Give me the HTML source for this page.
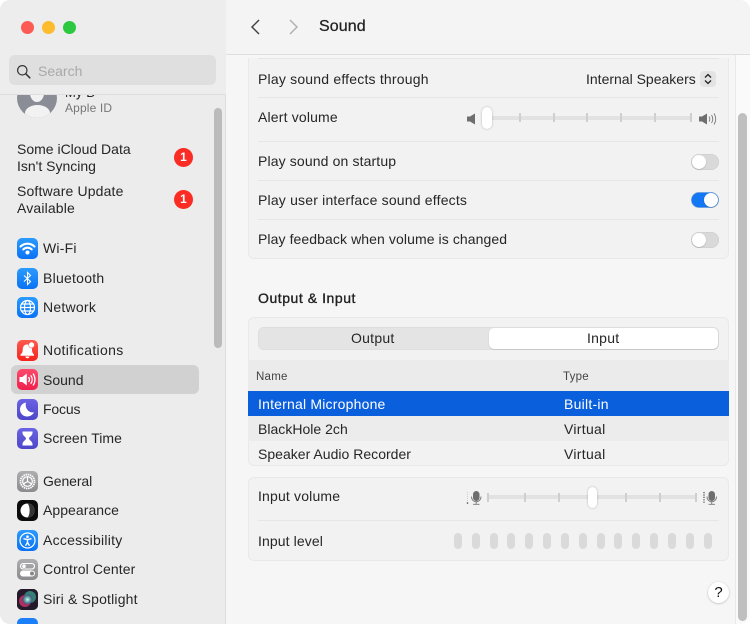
<!DOCTYPE html>
<html><head><meta charset="utf-8"><style>
html,body{margin:0;padding:0;background:#fff}
#w{position:relative;width:750px;height:624px;overflow:hidden;background:#f6f6f6;font-family:"Liberation Sans",sans-serif;font-size:14px;color:#262626;letter-spacing:.1px;border-radius:10px}
#w div,#w svg{position:absolute}
.t{white-space:nowrap;line-height:18px}
.ic{left:17px;width:21px;height:21px;border-radius:5px;overflow:hidden}
.ic svg{left:0;top:0;width:21px;height:21px}
.sep{height:1px;background:#e6e6e6}
.card{left:248px;width:481px;border-radius:6px;background:#f2f2f2;box-shadow:inset 0 0 0 1px #e9e9e9}
.tg{width:28px;height:16px;border-radius:8px;background:#d9d9d9;left:691px;box-shadow:inset 0 0 0 .5px #ccc}
.tg div{left:1px;top:1px;width:14px;height:14px;border-radius:7px;background:#fff;box-shadow:0 .5px 1px #0004}
.badge{left:174px;width:19px;height:19px;border-radius:50%;background:#fb2c24;color:#fff;font-weight:bold;font-size:12px;line-height:19px;text-align:center;letter-spacing:0}
.tick{width:2px;height:9px;background:#cfcfcf}
.lv{top:533px;width:8px;height:16px;border-radius:4px;background:#dadada}
</style></head><body><div id="w">

<!-- sidebar -->
<div style="left:0;top:0;width:226px;height:624px;background:#ececec;border-right:1px solid #dcdcdc;box-sizing:border-box"></div>
<div style="left:0;top:0;width:226px;height:95px;background:#ededed;border-bottom:1px solid #dedede;box-sizing:border-box;z-index:3"></div>
<div style="left:21px;top:21px;width:13px;height:13px;border-radius:50%;background:#fc5a55;z-index:4"></div>
<div style="left:42px;top:21px;width:13px;height:13px;border-radius:50%;background:#fdbb2e;z-index:4"></div>
<div style="left:63px;top:21px;width:13px;height:13px;border-radius:50%;background:#2cc83f;z-index:4"></div>
<div style="left:9px;top:55px;width:207px;height:30px;border-radius:6px;background:#dfdfdf;z-index:4"></div>
<svg style="left:16px;top:64px;z-index:5" width="15" height="15" viewBox="0 0 15 15" fill="none" stroke="#333" stroke-width="1.2"><circle cx="6.3" cy="6.3" r="4.7"/><path d="M9.8 9.8l4 4" stroke-linecap="round" stroke-width="1.5"/></svg>
<div class="t" style="left:38px;top:62px;color:#a9a9a9;z-index:5;letter-spacing:0">Search</div>

<!-- avatar -->
<div style="left:17px;top:78px;width:40px;height:40px;border-radius:50%;background:#8b8d96;overflow:hidden"><div style="left:13px;top:6px;width:14px;height:18px;border-radius:50%;background:#f2f2f2"></div><div style="left:8px;top:27px;width:25px;height:16px;border-radius:50%;background:#f2f2f2"></div></div>
<div class="t" style="left:65px;top:84px;font-size:13px">My D</div>
<div class="t" style="left:65px;top:99px;font-size:12px;color:#777;letter-spacing:.15px">Apple ID</div>

<div style="left:214px;top:108px;width:8px;height:240px;border-radius:4px;background:#bbb"></div>

<div class="t" style="left:17px;top:141px;line-height:17px;letter-spacing:0">Some iCloud Data<br>Isn't Syncing</div>
<div class="badge" style="top:148px">1</div>
<div class="t" style="left:17px;top:183px;line-height:17px;letter-spacing:.15px">Software Update<br>Available</div>
<div class="badge" style="top:190px">1</div>

<div style="left:11px;top:365px;width:188px;height:29px;border-radius:6px;background:#d1d1d1"></div>

<!-- icons -->
<div class="ic" style="top:238px;background:linear-gradient(#2b9bfd,#0a72f5)"><svg viewBox="0 0 21 21" fill="none" stroke="#fff" stroke-width="2.1" stroke-linecap="round"><path d="M3.5 8.500c4-3.800 10-3.800 14 0"/><path d="M6.300 11.400c2.500-2.300 5.900-2.300 8.400 0"/><circle cx="10.500" cy="14.500" r="1" fill="#fff"/></svg></div>
<div class="t" style="left:43px;top:239px;letter-spacing:.2px">Wi-Fi</div>
<div class="ic" style="top:268px;background:linear-gradient(#2b9bfd,#0a72f5)"><svg viewBox="0 0 21 21" fill="none" stroke="#fff" stroke-width="1.100"><path d="M7 7.500l6.500 6-3 3V4.500l3 3L7 13.500"/></svg></div>
<div class="t" style="left:43px;top:269px;letter-spacing:.25px">Bluetooth</div>
<div class="ic" style="top:297px;background:linear-gradient(#2b9bfd,#0a72f5)"><svg viewBox="0 0 21 21" fill="none" stroke="#fff" stroke-width="1.200"><circle cx="10.500" cy="10.500" r="7"/><ellipse cx="10.500" cy="10.500" rx="3" ry="7"/><path d="M3.500 10.500h14M4.500 7h12M4.500 14h12"/></svg></div>
<div class="t" style="left:43px;top:298px;letter-spacing:.25px">Network</div>

<div class="ic" style="top:340px;background:linear-gradient(#fd5a4e,#f5221c)"><svg viewBox="0 0 21 21" fill="#fff"><path d="M10 4.500c-3 0-4.300 2.500-4.300 5.200 0 2.700-1 3.800-2.200 4.800v1.300h13.500v-1.300c-1-1-2-2.200-2-4.800 0-.5 0-1-.2-1.500-2 0-3.800-2-3.300-3.500-.5-.2-1-.2-1.500-.2z"/><circle cx="14.500" cy="5" r="2.700"/><path d="M8.300 16.500h4.200c0 1-.9 1.700-2.100 1.700s-2.100-.7-2.100-1.700z"/></svg></div>
<div class="t" style="left:43px;top:341px;letter-spacing:.33px">Notifications</div>
<div class="ic" style="top:369px;background:linear-gradient(#fd4a6a,#f11f4d)"><svg viewBox="0 0 21 21" fill="none" stroke="#fff" stroke-width="1.300" stroke-linecap="round"><path d="M2.500 8h2.800L9.800 4.500v12l-4.500-3.500H2.500z" fill="#fff" stroke="none"/><path d="M11.800 8.500c.8 1.200.8 2.800 0 4M14 6.800c1.500 2.200 1.500 5.200 0 7.400M16.300 5c2.200 3.300 2.200 7.700 0 11"/></svg></div>
<div class="t" style="left:43px;top:371px;letter-spacing:0">Sound</div>
<div class="ic" style="top:399px;background:linear-gradient(#6a63e4,#4d46c8)"><svg viewBox="0 0 21 21" fill="#fff"><path d="M9 3.500c-3.700.7-6 3.700-6 7 0 3.900 3.200 7 7.200 7 3.100 0 5.700-1.700 6.800-4.200-4.800 1-9.500-3.800-8-9.800z"/></svg></div>
<div class="t" style="left:43px;top:400px;letter-spacing:-.15px">Focus</div>
<div class="ic" style="top:428px;background:linear-gradient(#6a63e4,#4d46c8)"><svg viewBox="0 0 21 21" fill="#fff"><path d="M5.500 3.500h10v1.500c0 2.500-3.500 4-3.500 5.500s3.500 3 3.500 5.500v1.500h-10V16c0-2.500 3.500-4 3.500-5.500S5.500 7.500 5.500 5z"/></svg></div>
<div class="t" style="left:43px;top:429px;letter-spacing:.03px">Screen Time</div>

<div class="ic" style="top:471px;background:linear-gradient(#aeaeb0,#8b8b8e)"><svg viewBox="0 0 21 21" fill="none" stroke="#fff" stroke-width="1.200"><circle cx="10.500" cy="10.500" r="7" stroke-dasharray="1.500 .7" stroke-width="1.800"/><circle cx="10.500" cy="10.500" r="4.800"/><path d="M10.500 10.500V6M10.500 10.500l4 2.300M10.500 10.500l-4 2.300"/></svg></div>
<div class="t" style="left:43px;top:472px;letter-spacing:-.1px">General</div>
<div class="ic" style="top:500px;background:#0c0c0c"><svg viewBox="0 0 21 21"><circle cx="10.500" cy="10.500" r="7" fill="#fff"/><path d="M10.500 3.500a7 7 0 0 1 0 14c2.800-2 2.800-12 0-14z" fill="#333"/></svg></div>
<div class="t" style="left:43px;top:501px;letter-spacing:.05px">Appearance</div>
<div class="ic" style="top:530px;background:linear-gradient(#2b9bfd,#0a72f5)"><svg viewBox="0 0 21 21" fill="none" stroke="#fff" stroke-width="1.200"><circle cx="10.500" cy="10.500" r="7.500"/><circle cx="10.500" cy="6.700" r="1.300" fill="#fff" stroke="none"/><path d="M6.500 8.700l4 .8 4-.8M10.500 9.500v3M10.500 12.500l-2 3.200M10.500 12.500l2 3.200" stroke-width="1.400"/></svg></div>
<div class="t" style="left:43px;top:531px;letter-spacing:.25px">Accessibility</div>
<div class="ic" style="top:559px;background:linear-gradient(#aeaeb0,#8b8b8e)"><svg viewBox="0 0 21 21"><rect x="3.500" y="4.500" width="14" height="5.500" rx="2.750" fill="none" stroke="#fff" stroke-width="1.100"/><circle cx="7" cy="7.200" r="1.800" fill="#fff"/><rect x="3" y="11.500" width="15" height="6" rx="3" fill="#fff"/><circle cx="15" cy="14.500" r="2" fill="#888"/></svg></div>
<div class="t" style="left:43px;top:560px;letter-spacing:.1px">Control Center</div>
<div class="ic" style="top:589px;background:#222"><svg viewBox="0 0 21 21"><defs><radialGradient id="a" cx=".5" cy=".5" r=".5"><stop offset="0" stop-color="#cfe"/><stop offset=".5" stop-color="#6aa"/><stop offset="1" stop-color="#447"/></radialGradient></defs><rect width="21" height="21" fill="#241a2c"/><circle cx="8" cy="12" r="6" fill="#d0366a" opacity=".8"/><circle cx="13" cy="8" r="6" fill="#3a9a8a" opacity=".8"/><circle cx="10.500" cy="10.500" r="5" fill="url(#a)"/></svg></div>
<div class="t" style="left:43px;top:590px;letter-spacing:.18px">Siri &amp; Spotlight</div>
<div class="ic" style="top:618px;background:#1a7ff8"></div>
<div class="t" style="left:43px;top:620px">Privacy &amp; Security</div>

<!-- main top bar -->
<div style="left:226px;top:0;width:524px;height:55px;background:#f4f4f4;border-bottom:1px solid #dedede;box-sizing:border-box;z-index:3"></div>
<svg style="left:249px;top:18px;z-index:4" width="12" height="18" viewBox="0 0 12 18" fill="none" stroke="#444" stroke-width="1.500"><path d="M10 2L3 9l7 7"/></svg>
<svg style="left:288px;top:18px;z-index:4" width="12" height="18" viewBox="0 0 12 18" fill="none" stroke="#b2b2b2" stroke-width="1.500"><path d="M2 2l7 7-7 7"/></svg>
<div class="t" style="left:319px;top:18px;font-size:16px;color:#222;z-index:4;-webkit-text-stroke:.25px #222;letter-spacing:.1px">Sound</div>

<!-- right scrollbar -->
<div style="left:735px;top:0;width:15px;height:624px;background:#fafafa;border-left:1px solid #e9e9e9;box-sizing:border-box"></div>
<div style="left:738px;top:113px;width:9px;height:508px;border-radius:4.500px;background:#bfbfbf"></div>

<!-- card 1 -->
<div class="card" style="top:40px;height:219px"></div>
<div class="sep" style="left:258px;top:58px;width:461px"></div>
<div class="t" style="left:258px;top:70px;letter-spacing:.2px">Play sound effects through</div>
<div class="t" style="left:586px;top:70px;letter-spacing:0">Internal Speakers</div>
<div style="left:700px;top:71px;width:16px;height:16px;border-radius:4px;background:#e3e3e3"></div>
<svg style="left:700px;top:71px" width="16" height="16" viewBox="0 0 16 16" fill="none" stroke="#222" stroke-width="1.300"><path d="M5 6.500L8 3.500l3 3M5 9.500l3 3 3-3"/></svg>
<div class="sep" style="left:258px;top:97px;width:461px"></div>
<div class="t" style="left:258px;top:108px;letter-spacing:.17px">Alert volume</div>
<svg style="left:466px;top:112px" width="12" height="14" viewBox="0 0 12 14" fill="#6e6e6e"><path d="M1 4.500h3L9 1.500v11l-5-3H1z"/></svg>
<div style="left:490px;top:116px;width:202px;height:4px;background:#e2e2e2"></div>
<div class="tick" style="left:519px;top:113px"></div><div class="tick" style="left:553px;top:113px"></div><div class="tick" style="left:586px;top:113px"></div><div class="tick" style="left:620px;top:113px"></div><div class="tick" style="left:654px;top:113px"></div><div class="tick" style="left:690px;top:113px"></div>
<div style="left:482px;top:107px;width:10px;height:22px;border-radius:5px;background:#fff;box-shadow:0 0 2px #0004"></div>
<svg style="left:698px;top:112px" width="20" height="14" viewBox="0 0 20 14"><path d="M1 4.500h3L9 1.500v11l-5-3H1z" fill="#6e6e6e"/><path d="M11 4.500c1 1.500 1 3.500 0 5M13.500 3c1.600 2.500 1.600 5.500 0 8M16 1.500c2.200 3.500 2.200 7.500 0 11" fill="none" stroke="#777" stroke-width=".9"/></svg>
<div class="sep" style="left:258px;top:141px;width:461px"></div>
<div class="t" style="left:258px;top:152px;letter-spacing:.13px">Play sound on startup</div>
<div class="tg" style="top:154px"><div></div></div>
<div class="sep" style="left:258px;top:180px;width:461px"></div>
<div class="t" style="left:258px;top:191px;letter-spacing:.19px">Play user interface sound effects</div>
<div class="tg" style="top:192px;background:#1478f5"><div style="left:13px"></div></div>
<div class="sep" style="left:258px;top:219px;width:461px"></div>
<div class="t" style="left:258px;top:230px;letter-spacing:.09px">Play feedback when volume is changed</div>
<div class="tg" style="top:232px"><div></div></div>

<div style="left:226px;top:55px;width:509px;height:3px;background:#f6f6f6;z-index:2"></div>

<div class="t" style="left:258px;top:289px;-webkit-text-stroke:.35px #222;color:#222;letter-spacing:.55px">Output &amp; Input</div>

<!-- card 2 -->
<div class="card" style="top:317px;height:149px"></div>
<div style="left:258px;top:327px;width:461px;height:23px;border-radius:6px;background:#e4e4e4;box-shadow:inset 0 0 0 .5px #d9d9d9"></div>
<div style="left:489px;top:328px;width:229px;height:21px;border-radius:5px;background:#fff;box-shadow:0 .5px 1px #0003"></div>
<div class="t" style="left:351px;top:329px;letter-spacing:.25px">Output</div>
<div class="t" style="left:587px;top:329px;letter-spacing:.25px">Input</div>
<div style="left:248px;top:360px;width:481px;height:31px;background:#ebebeb"></div>
<div class="t" style="left:256px;top:368px;font-size:11.500px;color:#444;letter-spacing:.25px">Name</div>
<div class="t" style="left:563px;top:368px;font-size:11.500px;color:#444;letter-spacing:.25px">Type</div>
<div style="left:248px;top:391px;width:481px;height:25px;background:#0a5fdc"></div>
<div class="t" style="left:258px;top:395px;color:#fff;letter-spacing:.2px">Internal Microphone</div>
<div class="t" style="left:564px;top:395px;color:#fff;letter-spacing:.25px">Built-in</div>
<div style="left:248px;top:416px;width:481px;height:25px;background:#ececec"></div>
<div class="t" style="left:258px;top:420px;letter-spacing:.02px">BlackHole 2ch</div>
<div class="t" style="left:564px;top:420px;letter-spacing:.3px">Virtual</div>
<div class="t" style="left:258px;top:445px;letter-spacing:.02px">Speaker Audio Recorder</div>
<div class="t" style="left:564px;top:445px;letter-spacing:.3px">Virtual</div>

<!-- card 3 -->
<div class="card" style="top:477px;height:84px"></div>
<div class="t" style="left:258px;top:487px;letter-spacing:.17px">Input volume</div>
<svg style="left:466px;top:489px" width="16" height="18" viewBox="0 0 16 18"><rect x="7" y="2" width="6.500" height="10" rx="3.250" fill="#6e6e6e"/><path d="M5.500 7.500c0 7 9.500 7 9.500 0M10.200 12.500v2.500M7 15.300h6.500" fill="none" stroke="#777" stroke-width=".9"/><path d="M1.500 3v9" stroke="#ccc" stroke-dasharray="1 1"/><circle cx="1.500" cy="14" r=".8" fill="#444"/></svg>
<svg style="left:701px;top:489px" width="16" height="18" viewBox="0 0 16 18"><rect x="7.500" y="2" width="6.500" height="10" rx="3.250" fill="#6e6e6e"/><path d="M6 7.500c0 7 9.500 7 9.500 0M10.700 12.500v2.500M7.500 15.300H14" fill="none" stroke="#777" stroke-width=".9"/><path d="M3 3v11" stroke="#444" stroke-dasharray="1.200 1.200" stroke-width="1.200"/></svg>
<div style="left:488px;top:495px;width:209px;height:4px;background:#e2e2e2"></div>
<div class="tick" style="left:487px;top:493px"></div><div class="tick" style="left:524px;top:493px"></div><div class="tick" style="left:558px;top:493px"></div><div class="tick" style="left:625px;top:493px"></div><div class="tick" style="left:659px;top:493px"></div><div class="tick" style="left:695px;top:493px"></div>
<div style="left:588px;top:487px;width:9px;height:21px;border-radius:4.500px;background:#fff;box-shadow:0 0 2px #0004"></div>
<div class="sep" style="left:258px;top:520px;width:461px"></div>
<div class="t" style="left:258px;top:532px;letter-spacing:.1px">Input level</div>
<div class="lv" style="left:454px"></div><div class="lv" style="left:472px"></div><div class="lv" style="left:490px"></div><div class="lv" style="left:507px"></div><div class="lv" style="left:525px"></div><div class="lv" style="left:543px"></div><div class="lv" style="left:561px"></div><div class="lv" style="left:579px"></div><div class="lv" style="left:597px"></div><div class="lv" style="left:614px"></div><div class="lv" style="left:632px"></div><div class="lv" style="left:650px"></div><div class="lv" style="left:668px"></div><div class="lv" style="left:686px"></div><div class="lv" style="left:704px"></div>

<div style="left:708px;top:582px;width:21px;height:21px;border-radius:50%;background:#fff;box-shadow:0 .5px 2px #0004;text-align:center;line-height:21px;font-size:15px;color:#111;letter-spacing:0">?</div>
</div></body></html>
